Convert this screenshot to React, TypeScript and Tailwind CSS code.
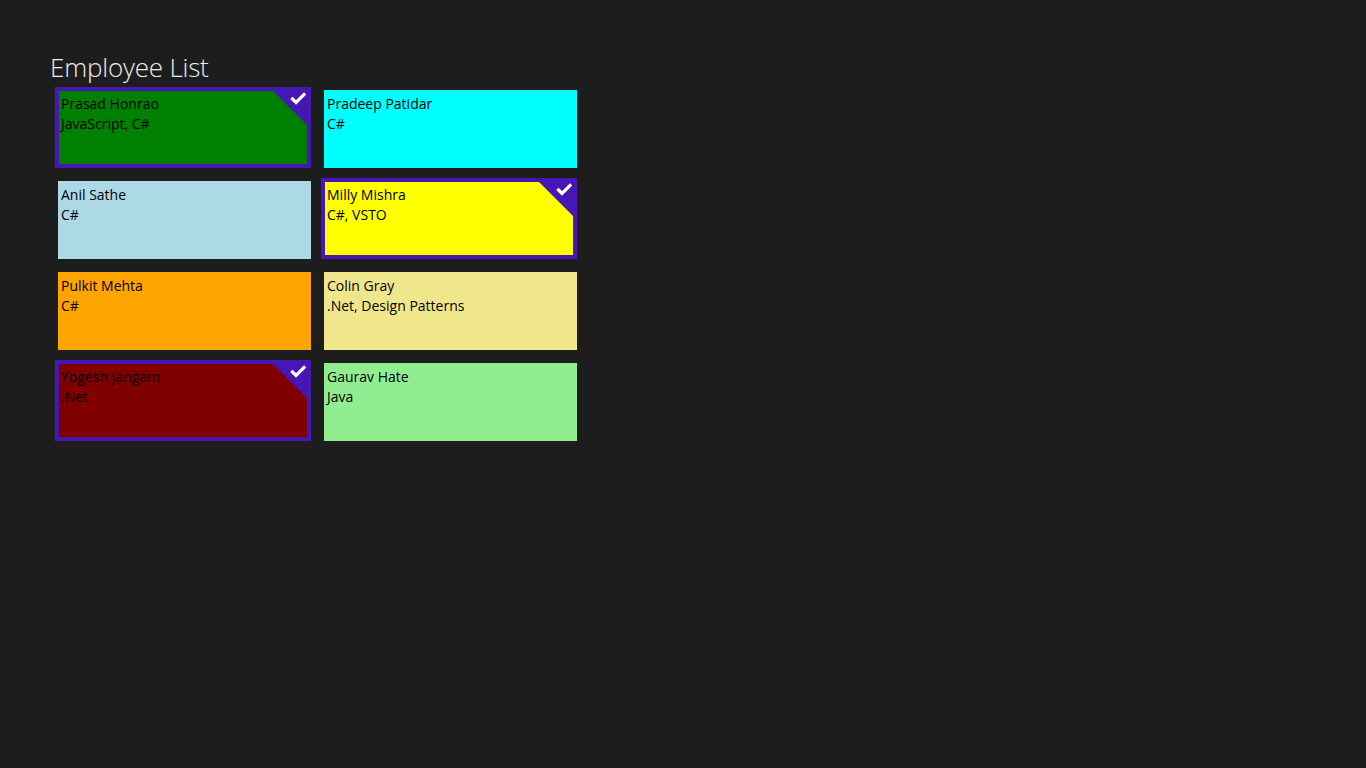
import React from "react";

type Emp = { name: string; skills: string; bg: string; selected?: boolean };

const employees: Emp[] = [
  { name: "Prasad Honrao", skills: "JavaScript, C#", bg: "bg-[#008000]", selected: true },
  { name: "Pradeep Patidar", skills: "C#", bg: "bg-[#00ffff]" },
  { name: "Anil Sathe", skills: "C#", bg: "bg-[#add8e6]" },
  { name: "Milly Mishra", skills: "C#, VSTO", bg: "bg-[#ffff00]", selected: true },
  { name: "Pulkit Mehta", skills: "C#", bg: "bg-[#ffa500]" },
  { name: "Colin Gray", skills: ".Net, Design Patterns", bg: "bg-[#f0e68c]" },
  { name: "Yogesh Jangam", skills: ".Net", bg: "bg-[#800000]", selected: true },
  { name: "Gaurav Hate", skills: "Java", bg: "bg-[#90ee90]" },
];

function Tile({ e }: { e: Emp }) {
  if (e.selected) {
    return (
      <div className="w-[253px] h-[78px]">
        <div className="-ml-[3px] -mt-[3px] w-[256px] h-[81px] border-4 border-[#4617b4]">
          <div className={`relative w-full h-full ${e.bg}`}>
            <div className="pt-[3px] pl-[2px] text-[14px] leading-[20px] text-black">
              <div>{e.name}</div>
              <div>{e.skills}</div>
            </div>
            <svg
              className="absolute top-0 right-0"
              width="34"
              height="34"
              viewBox="0 0 34 34"
            >
              <polygon points="0,0 34,0 34,34" fill="#4617b4" />
              <polyline
                points="19.5,8 23,11.5 31,3.5"
                fill="none"
                stroke="#ffffff"
                strokeWidth="3.2"
                strokeLinecap="square"
              />
            </svg>
          </div>
        </div>
      </div>
    );
  }
  return (
    <div className={`w-[253px] h-[78px] ${e.bg}`}>
      <div className="pt-[4px] pl-[3px] text-[14px] leading-[20px] text-black">
        <div>{e.name}</div>
        <div>{e.skills}</div>
      </div>
    </div>
  );
}

export default function App() {
  return (
    <div
      className="w-[1366px] h-[768px] bg-[#1d1d1d] overflow-hidden"
      style={{ fontFamily: '"Open Sans", "Noto Sans", sans-serif' }}
    >
      <div className="pl-[50px] pt-[49px]">
        <h1 className="text-[26px] leading-[36px] font-light text-[#ececec] tracking-[-0.2px]">
          Employee List
        </h1>
      </div>
      <div className="pl-[58px] pt-[5px] grid grid-cols-[253px_253px] gap-x-[13px] gap-y-[13px]">
        {employees.map((e) => (
          <Tile key={e.name} e={e} />
        ))}
      </div>
    </div>
  );
}
